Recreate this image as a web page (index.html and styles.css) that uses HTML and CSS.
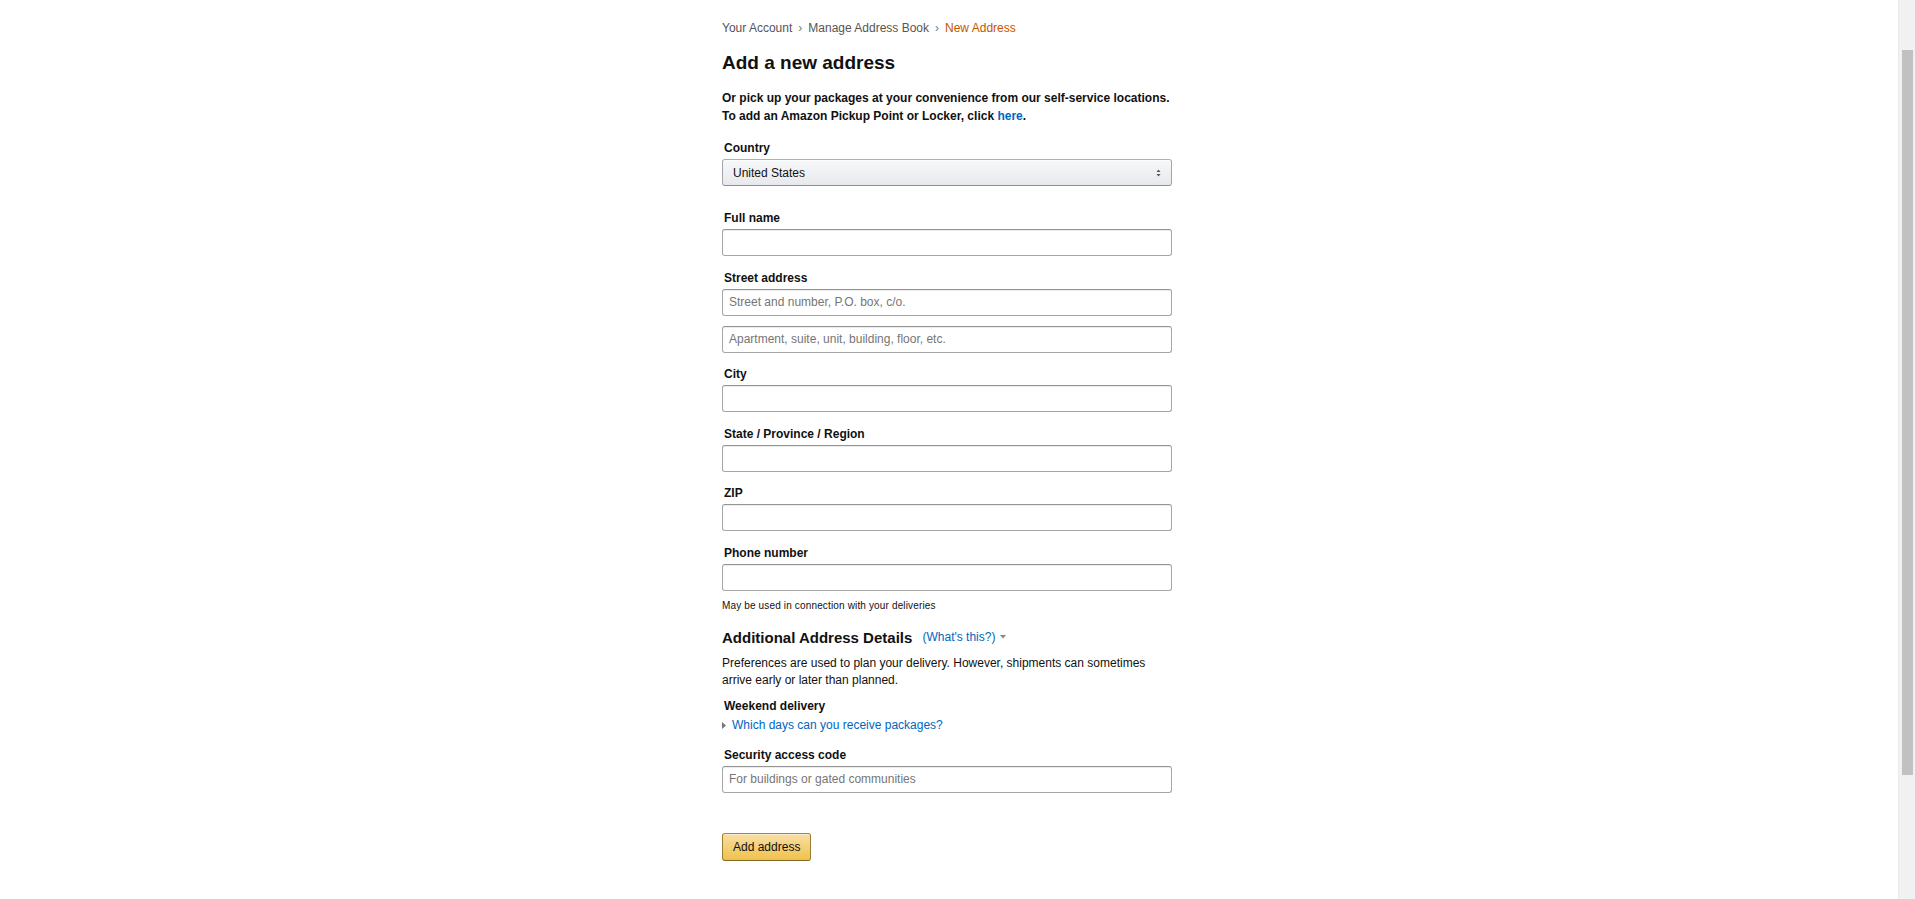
FILE: index.html
```html
<html>
  <head>
    <link rel="stylesheet" href="styles.css">
    <title>Add a new address</title>
  </head>
  <body>
    <div class="window">
      <main class="page">
        <div class="content">
          <nav class="breadcrumb">
            <a href="#">Your Account</a><span class="sep">›</span><a href="#">Manage Address Book</a><span class="sep">›</span><span class="current">New Address</span>
          </nav>

          <h1>Add a new address</h1>

          <p class="intro">
            Or pick up your packages at your convenience from our self-service locations.<br>
            To add an Amazon Pickup Point or Locker, click <a href="#">here</a>.
          </p>

          <form class="address-form">
            <div class="field field-country">
              <label>Country</label>
              <span class="dropdown">
                <span class="dropdown-prompt">United States</span>
                <svg class="dropdown-icon" width="5" height="8" viewBox="0 0 5 8">
                  <path d="M2.5 0.5 L4.5 3 L0.5 3 Z M0.5 5 L4.5 5 L2.5 7.5 Z" fill="#555"/>
                </svg>
              </span>
            </div>

            <div class="field">
              <label>Full name</label>
              <input type="text" class="text-input">
            </div>

            <div class="field">
              <label>Street address</label>
              <input type="text" class="text-input" placeholder="Street and number, P.O. box, c/o.">
              <input type="text" class="text-input second-line" placeholder="Apartment, suite, unit, building, floor, etc.">
            </div>

            <div class="field">
              <label>City</label>
              <input type="text" class="text-input">
            </div>

            <div class="field">
              <label>State / Province / Region</label>
              <input type="text" class="text-input">
            </div>

            <div class="field">
              <label>ZIP</label>
              <input type="text" class="text-input">
            </div>

            <div class="field field-phone">
              <label>Phone number</label>
              <input type="text" class="text-input">
              <div class="hint">May be used in connection with your deliveries</div>
            </div>

            <h2>
              Additional Address Details
              <a href="#" class="whats-this">(What's this?)<svg class="caret" width="6" height="4" viewBox="0 0 6 4"><path d="M0 0 L6 0 L3 3.5 Z" fill="#888"/></svg></a>
            </h2>

            <p class="details-note">
              Preferences are used to plan your delivery. However, shipments can sometimes arrive early or later than planned.
            </p>

            <label class="weekend-label">Weekend delivery</label>
            <a href="#" class="expander">
              <svg class="expander-icon" width="4" height="7" viewBox="0 0 4 7"><path d="M0 0 L4 3.5 L0 7 Z" fill="#777"/></svg>Which days can you receive packages?
            </a>

            <div class="field field-security">
              <label>Security access code</label>
              <input type="text" class="text-input" placeholder="For buildings or gated communities">
            </div>

            <button type="submit" class="primary-button">Add address</button>
          </form>
        </div>
      </main>

      <div class="scrollbar">
        <div class="thumb"></div>
      </div>
    </div>
  </body>
</html>
```

FILE: styles.css
```css
html, body {
  margin: 0;
  height: 100%;
  overflow: hidden;
}

body {
  font-family: "Liberation Sans", Arial, sans-serif;
  font-size: 12px;
  color: #111;
  background: #fff;
}

a {
  color: #0066c0;
  text-decoration: none;
}

.window {
  display: flex;
  height: 100vh;
}

.page {
  flex: 1;
  padding-top: 20px;
}

.content {
  width: 454px;
  margin: 0 auto;
}

/* breadcrumb */
.breadcrumb {
  line-height: 16px;
  color: #555;
}
.breadcrumb a {
  color: #555;
}
.breadcrumb .sep {
  margin: 0 6px;
  color: #767676;
}
.breadcrumb .current {
  color: #c45500;
}

h1 {
  margin: 15px 0 0;
  font-size: 19px;
  line-height: 23px;
  font-weight: 700;
}

.intro {
  margin: 15px 0 0;
  font-weight: 700;
  line-height: 18px;
}

/* form */
.address-form {
  width: 450px;
}

.field {
  margin-bottom: 12.5px;
}

.field label,
.weekend-label {
  display: block;
  padding: 0 0 1px 2px;
  font-weight: 700;
  line-height: 19px;
}

.field-country {
  margin-top: 14px;
  margin-bottom: 23px;
}

.text-input {
  display: block;
  box-sizing: border-box;
  width: 100%;
  height: 27px;
  margin: 0;
  padding: 0 6px;
  font-family: inherit;
  font-size: 12px;
  color: #111;
  background: #fff;
  border: 1px solid #a6a6a6;
  border-top-color: #949494;
  border-radius: 3px;
  box-shadow: 0 1px 0 rgba(255,255,255,.5), 0 1px 0 rgba(0,0,0,.07) inset;
  outline: none;
}
.text-input::placeholder {
  color: #767676;
}
.text-input.second-line {
  margin-top: 10px;
}

.dropdown {
  display: flex;
  align-items: center;
  justify-content: space-between;
  box-sizing: border-box;
  height: 27px;
  padding: 0 10px 0 10px;
  background: linear-gradient(to bottom, #f7f8fa, #e7e9ec);
  border: 1px solid;
  border-color: #adb1b8 #a2a6ac #8d9096;
  border-radius: 3px;
  box-shadow: 0 1px 0 rgba(255,255,255,.6) inset;
}

.field-phone {
  margin-bottom: 0;
}
.hint {
  margin-top: 8px;
  font-size: 10px;
  letter-spacing: .15px;
  line-height: 14px;
  color: #111;
}

h2 {
  margin: 15px 0 0;
  font-size: 15px;
  line-height: 19px;
  font-weight: 700;
}
.whats-this {
  margin-left: 6px;
  font-size: 12px;
  font-weight: 400;
  vertical-align: 2px;
}
.whats-this .caret {
  margin-left: 5px;
  vertical-align: 2px;
}

.details-note {
  margin: 8px 0 0;
  line-height: 17px;
}

.weekend-label {
  margin-top: 8px;
}

.expander {
  display: block;
  line-height: 17px;
}
.expander-icon {
  margin-right: 6px;
  vertical-align: 0;
}

.field-security {
  margin-top: 12px;
  margin-bottom: 0;
}

.primary-button {
  display: block;
  box-sizing: border-box;
  height: 28px;
  margin-top: 40px;
  padding: 0 10px;
  font-family: inherit;
  font-size: 12px;
  color: #111;
  background: linear-gradient(to bottom, #f7dfa5, #f0c14b);
  border: 1px solid;
  border-color: #a88734 #9c7e31 #846a29;
  border-radius: 3px;
  box-shadow: 0 1px 0 rgba(255,255,255,.4) inset;
}

/* window scrollbar as it appears in the capture */
.scrollbar {
  width: 17px;
  box-sizing: border-box;
  padding: 50px 2px 0 3px;
  background: #f1f1f1;
  border-left: 1px solid #ebebeb;
}
.scrollbar .thumb {
  height: 725px;
  background: #c1c1c1;
}
```
